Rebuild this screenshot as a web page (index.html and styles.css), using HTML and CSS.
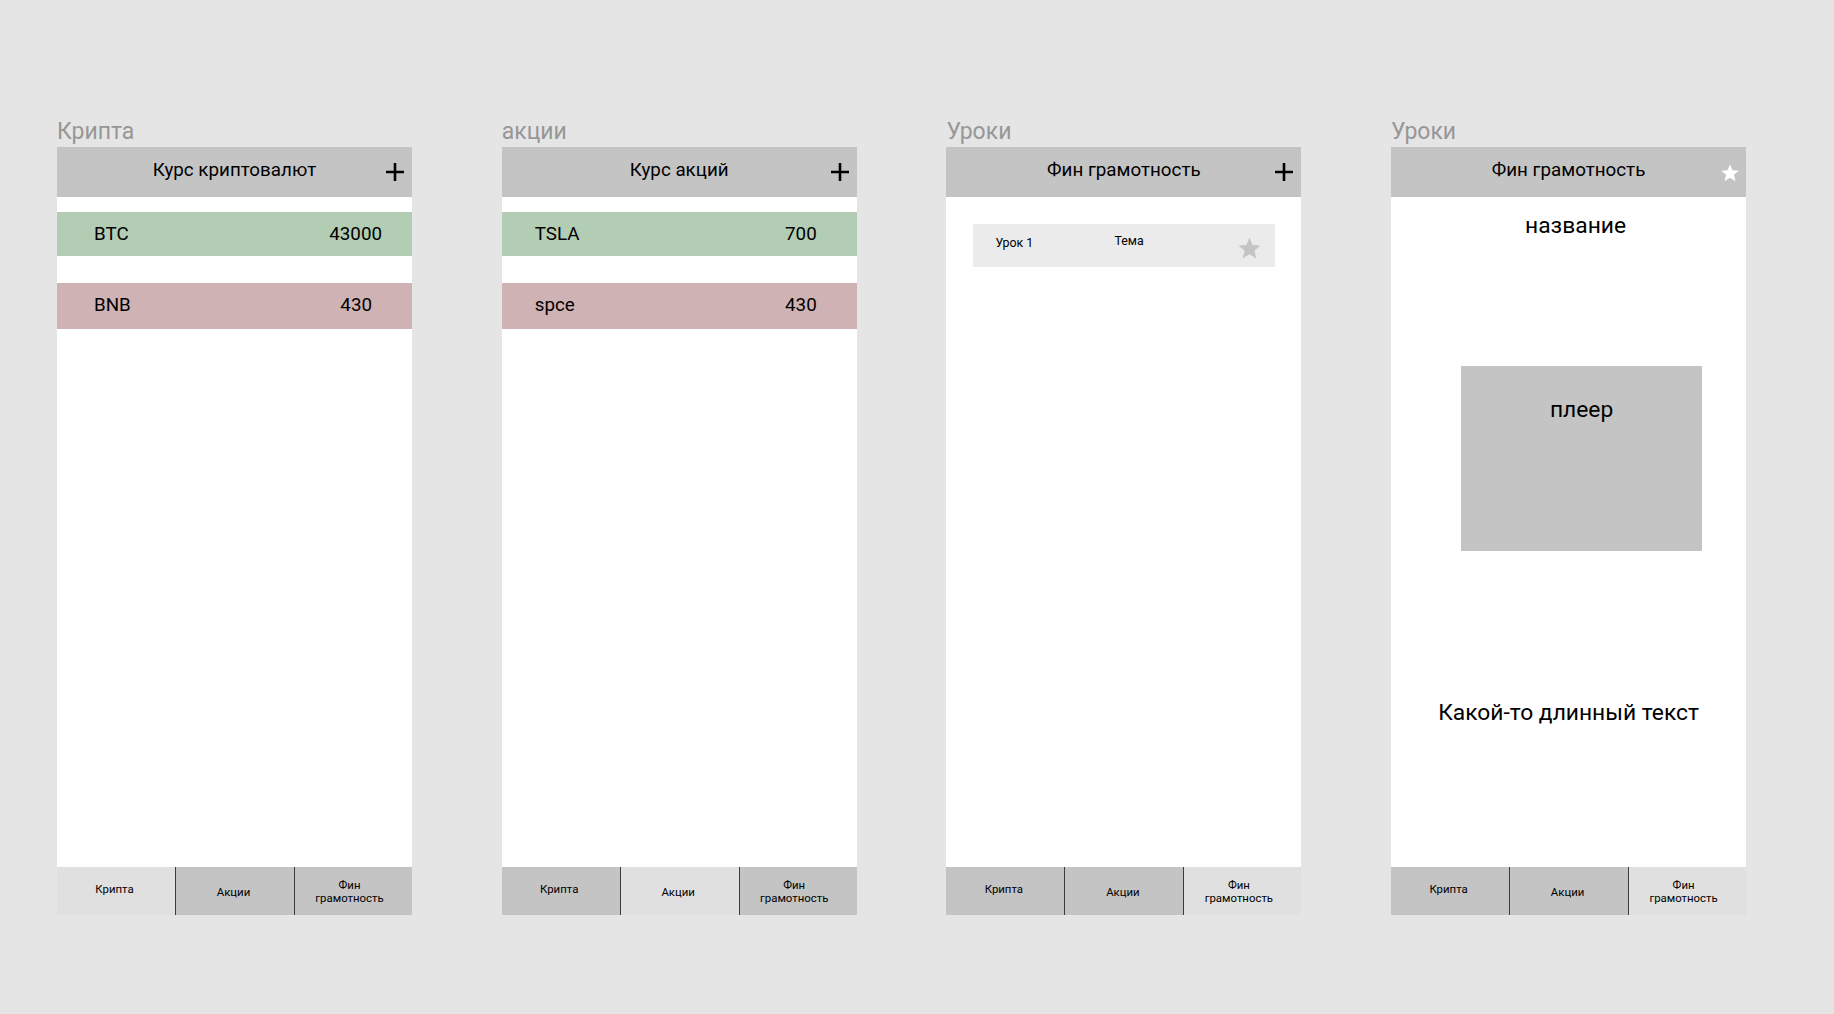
FILE: index.html
```html
<!DOCTYPE html>
<html lang="ru">

<head>
  <meta charset="UTF-8">
  <meta name="viewport" content="width=device-width, initial-scale=1.0">
  <title>Макеты</title>
  <link rel="stylesheet" href="styles.css">
</head>

<body>

  <div class="board">

    <!-- Крипта -->
    <section class="screen">
      <div class="screen-label">Крипта</div>
      <div class="phone">
        <div class="phone-head">
          <span></span>
          <h1>Курс криптовалют</h1>
          <svg class="icon-plus" viewBox="0 0 20 20"><path d="M10 1v18M1 10h18" /></svg>
        </div>
        <div class="phone-body">
          <ul class="quotes quotes-crypto">
            <li class="quote up wide"><span>BTC</span><span>43000</span></li>
            <li class="quote down"><span>BNB</span><span>430</span></li>
          </ul>
        </div>
        <div class="tabs">
          <span class="tab active raise">Крипта</span>
          <span class="tab">Акции</span>
          <span class="tab">Фин<br>грамотность</span>
        </div>
      </div>
    </section>

    <!-- акции -->
    <section class="screen">
      <div class="screen-label">акции</div>
      <div class="phone">
        <div class="phone-head">
          <span></span>
          <h1>Курс акций</h1>
          <svg class="icon-plus" viewBox="0 0 20 20"><path d="M10 1v18M1 10h18" /></svg>
        </div>
        <div class="phone-body">
          <ul class="quotes">
            <li class="quote up"><span>TSLA</span><span>700</span></li>
            <li class="quote down"><span>spce</span><span>430</span></li>
          </ul>
        </div>
        <div class="tabs">
          <span class="tab raise">Крипта</span>
          <span class="tab active">Акции</span>
          <span class="tab">Фин<br>грамотность</span>
        </div>
      </div>
    </section>

    <!-- Уроки: список -->
    <section class="screen">
      <div class="screen-label">Уроки</div>
      <div class="phone">
        <div class="phone-head">
          <span></span>
          <h1>Фин грамотность</h1>
          <svg class="icon-plus" viewBox="0 0 20 20"><path d="M10 1v18M1 10h18" /></svg>
        </div>
        <div class="phone-body">
          <div class="lesson">
            <span class="lesson-num">Урок 1</span>
            <span class="lesson-topic">Тема</span>
            <svg class="lesson-star" viewBox="0 0 24 24"><polygon points="12,1.5 14.9,8.6 22.5,9.2 16.7,14.1 18.5,21.6 12,17.6 5.5,21.6 7.3,14.1 1.5,9.2 9.1,8.6" /></svg>
          </div>
        </div>
        <div class="tabs">
          <span class="tab raise">Крипта</span>
          <span class="tab">Акции</span>
          <span class="tab active">Фин<br>грамотность</span>
        </div>
      </div>
    </section>

    <!-- Уроки: урок -->
    <section class="screen">
      <div class="screen-label">Уроки</div>
      <div class="phone">
        <div class="phone-head">
          <span></span>
          <h1>Фин грамотность</h1>
          <svg class="icon-star" viewBox="0 0 24 24"><polygon points="12,1.5 14.9,8.6 22.5,9.2 16.7,14.1 18.5,21.6 12,17.6 5.5,21.6 7.3,14.1 1.5,9.2 9.1,8.6" /></svg>
        </div>
        <div class="phone-body lesson-page">
          <h2 class="lesson-title">название</h2>
          <div class="player">плеер</div>
          <p class="lesson-text">Какой-то длинный текст</p>
        </div>
        <div class="tabs">
          <span class="tab raise">Крипта</span>
          <span class="tab">Акции</span>
          <span class="tab active">Фин<br>грамотность</span>
        </div>
      </div>
    </section>

  </div>

</body>

</html>
```

FILE: styles.css
```css
* {
  margin: 0;
  padding: 0;
  list-style: none;
  box-sizing: border-box;
}

html,
body {
  width: 100%;
  height: 100%;
}

body {
  background: #e5e5e5;
  font-family: Roboto, "Noto Sans", "Liberation Sans", sans-serif;
  color: #000;
}

.board {
  display: flex;
  gap: 89.7px;
  padding: 119px 0 0 57px;
}

.screen {
  width: 355px;
}

.screen-label {
  font-size: 23px;
  line-height: 26px;
  height: 28px;
  color: #979797;
}

.phone {
  height: 768px;
  display: flex;
  flex-direction: column;
  background: #fff;
}

/* шапка экрана */
.phone-head {
  height: 50px;
  background: #c4c4c4;
  display: grid;
  grid-template-columns: 34px 1fr 34px;
  align-items: center;
  justify-items: center;
}

.phone-head h1 {
  font-size: 18.8px;
  font-weight: 400;
  line-height: 22px;
  padding-bottom: 4px;
}

.icon-plus {
  width: 20px;
  height: 20px;
  fill: none;
  stroke: #000;
  stroke-width: 2.6;
}

.icon-star {
  width: 20px;
  height: 20px;
  fill: #fff;
  margin: 2px 0 0 2px;
}

.phone-body {
  flex: 1;
}

/* котировки */
.quotes {
  padding-top: 15px;
}

.quote {
  display: flex;
  justify-content: space-between;
  align-items: center;
  font-size: 18.8px;
  padding: 0 40px 0 33px;
}

.quotes-crypto .quote {
  padding-left: 37px;
}

.quote.wide {
  padding-right: 30px;
}

.quote.up {
  height: 44px;
  background: #b3cdb4;
}

.quote.down {
  height: 46px;
  margin-top: 27px;
  background: #cfb2b3;
  padding-bottom: 3px;
}

/* список уроков */
.lesson {
  display: flex;
  align-items: flex-start;
  height: 43px;
  margin: 27px 26px 0 27px;
  background: #ebebeb;
  font-size: 12.4px;
  line-height: 14px;
}

.lesson-num {
  width: 119px;
  margin: 12px 0 0 22px;
}

.lesson-topic {
  margin-top: 10px;
}

.lesson-star {
  width: 25px;
  height: 25px;
  fill: #c4c4c4;
  margin: 12px 13px 0 auto;
}

/* страница урока */
.lesson-page {
  display: flex;
  flex-direction: column;
  font-size: 22.8px;
  line-height: 26px;
}

.lesson-title {
  font-size: 22.8px;
  font-weight: 400;
  text-align: center;
  margin-top: 16px;
  padding-left: 14px;
}

.player {
  width: 241px;
  height: 185px;
  margin: 127px 0 0 70px;
  padding-top: 31px;
  background: #c4c4c4;
  text-align: center;
}

.lesson-text {
  text-align: center;
  margin-top: 149px;
}

/* нижнее меню */
.tabs {
  height: 48px;
  display: grid;
  grid-template-columns: 118px 119px 118px;
}

.tab {
  display: flex;
  align-items: center;
  justify-content: center;
  text-align: center;
  font-size: 11.4px;
  line-height: 13px;
  background: #c4c4c4;
  padding: 2px 3px 0 0;
}

.tab + .tab {
  border-left: 1px solid #3c3c3c;
}

.tab:last-child {
  padding-right: 8px;
}

.tab.raise {
  padding-top: 0;
  padding-bottom: 4px;
}

.tab.active {
  background: #e0e0e0;
}
```
